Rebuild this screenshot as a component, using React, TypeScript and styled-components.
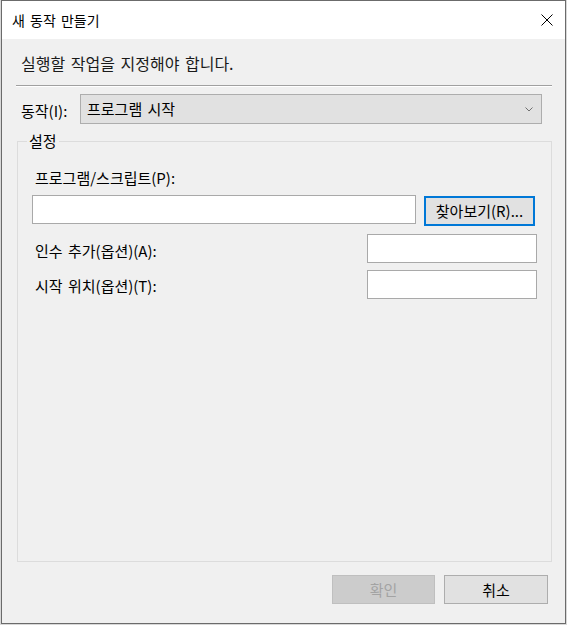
import React from "react";
import styled, { createGlobalStyle } from "styled-components";

const Global = createGlobalStyle`
  html, body { margin: 0; padding: 0; }
  body {
    background: #d8d8d8;
    padding-left: 1px;
    font-family: "Noto Sans CJK KR", "Noto Sans", sans-serif;
    color: #000;
  }
  * { box-sizing: border-box; }
`;

const Window = styled.div`
  width: 565px;
  height: 624px;
  border: 1px solid #6b6b6b;
  display: flex;
  flex-direction: column;
  background: #f0f0f0;
  font-size: 15px;
  word-spacing: 2px;
`;

const TitleBar = styled.div`
  height: 38px;
  flex: none;
  background: #fff;
  display: flex;
  align-items: center;
  justify-content: space-between;
  padding-left: 10px;
`;

const Title = styled.span`
  font-size: 14px;
  line-height: 20px;
  margin-top: -1px;
`;

const CloseButton = styled.div`
  width: 36px;
  height: 38px;
  display: flex;
  align-items: center;
  justify-content: center;
`;

const Body = styled.div`
  flex: 1;
  display: flex;
  flex-direction: column;
`;

const Instruction = styled.div`
  margin-top: 14px;
  padding-left: 19px;
  font-size: 16px;
  line-height: 20px;
  color: #1a1a1a;
`;

const Separator = styled.div`
  margin: 12px 0 0 14px;
  width: 536px;
  height: 2px;
  border-top: 1px solid #a0a0a0;
  border-bottom: 1px solid #fff;
`;

const ActionRow = styled.div`
  margin-top: 7px;
  padding-left: 19px;
  display: flex;
  align-items: center;
`;

const ActionLabel = styled.span`
  width: 59px;
  line-height: 20px;
  padding-top: 3px;
`;

const Select = styled.div`
  width: 462px;
  height: 30px;
  background: #e1e1e1;
  border: 1px solid #adadad;
  display: flex;
  align-items: center;
  justify-content: space-between;
  padding: 0 8px 0 6px;
  line-height: 20px;
`;

const Group = styled.div`
  position: relative;
  margin: 17px 0 0 15px;
  width: 535px;
  height: 421px;
  border: 1px solid #dcdcdc;
  padding: 26px 14px 0 14px;
  display: flex;
  flex-direction: column;
`;

const Legend = styled.span`
  position: absolute;
  top: -11px;
  left: 9px;
  padding: 0 2px;
  background: #f0f0f0;
  line-height: 20px;
`;

const FieldLabel = styled.span<{ $shift?: number }>`
  padding-left: 3px;
  line-height: 20px;
  padding-top: ${(p) => p.$shift ?? 0}px;
`;

const BrowseRow = styled.div`
  margin-top: 7px;
  display: flex;
  align-items: flex-start;
  gap: 8px;
`;

const Row = styled.div<{ $gap: number }>`
  margin-top: ${(p) => p.$gap}px;
  display: flex;
  align-items: center;
  justify-content: space-between;
`;

const TextBox = styled.div<{ $w: number }>`
  width: ${(p) => p.$w}px;
  height: 29px;
  background: #fff;
  border: 1px solid #a9a9a9;
`;

const Button = styled.div<{ $w: number; $variant?: "focus" | "disabled" }>`
  width: ${(p) => p.$w}px;
  height: ${(p) => (p.$variant === "focus" ? 30 : 29)}px;
  margin-top: ${(p) => (p.$variant === "focus" ? 1 : 0)}px;
  display: flex;
  align-items: center;
  justify-content: center;
  line-height: 20px;
  word-spacing: 0;
  background: ${(p) => (p.$variant === "disabled" ? "#cccccc" : "#e1e1e1")};
  border: ${(p) =>
    p.$variant === "focus"
      ? "2px solid #0078d7"
      : p.$variant === "disabled"
      ? "1px solid #bfbfbf"
      : "1px solid #adadad"};
  color: ${(p) => (p.$variant === "disabled" ? "#a3a3a3" : "#000")};
`;

const Footer = styled.div`
  margin-top: 13px;
  display: flex;
  justify-content: flex-end;
  gap: 9px;
  padding-right: 17px;
`;

export default function App() {
  return (
    <>
      <Global />
      <Window>
        <TitleBar>
          <Title>새 동작 만들기</Title>
          <CloseButton>
            <svg width="12" height="12" viewBox="0 0 12 12">
              <path d="M0.5 0.5 L11.5 11.5 M11.5 0.5 L0.5 11.5" stroke="#000" strokeWidth="1" />
            </svg>
          </CloseButton>
        </TitleBar>
        <Body>
          <Instruction>실행할 작업을 지정해야 합니다.</Instruction>
          <Separator />
          <ActionRow>
            <ActionLabel>동작(I):</ActionLabel>
            <Select>
              <span>프로그램 시작</span>
              <svg width="8" height="5" viewBox="0 0 8 5">
                <path d="M0.5 0.5 L4 4 L7.5 0.5" stroke="#707070" strokeWidth="1" fill="none" />
              </svg>
            </Select>
          </ActionRow>
          <Group>
            <Legend>설정</Legend>
            <FieldLabel>프로그램/스크립트(P):</FieldLabel>
            <BrowseRow>
              <TextBox $w={384} />
              <Button $w={111} $variant="focus">찾아보기(R)...</Button>
            </BrowseRow>
            <Row $gap={8}>
              <FieldLabel $shift={4}>인수 추가(옵션)(A):</FieldLabel>
              <TextBox $w={170} />
            </Row>
            <Row $gap={7}>
              <FieldLabel $shift={3}>시작 위치(옵션)(T):</FieldLabel>
              <TextBox $w={170} />
            </Row>
          </Group>
          <Footer>
            <Button $w={103} $variant="disabled">확인</Button>
            <Button $w={104}>취소</Button>
          </Footer>
        </Body>
      </Window>
    </>
  );
}
